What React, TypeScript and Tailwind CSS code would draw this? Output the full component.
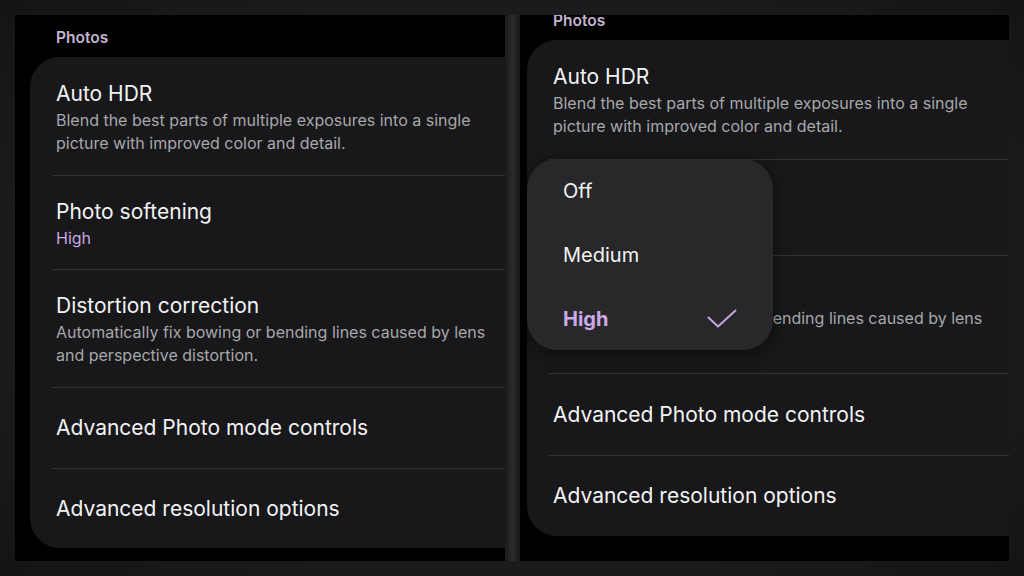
import React from "react";

type Row = {
  title: string;
  desc?: string;
  value?: string;
};

const rows: Row[] = [
  {
    title: "Auto HDR",
    desc: "Blend the best parts of multiple exposures into a single picture with improved color and detail.",
  },
  { title: "Photo softening", value: "High" },
  {
    title: "Distortion correction",
    desc: "Automatically fix bowing or bending lines caused by lens and perspective distortion.",
  },
  { title: "Advanced Photo mode controls" },
  { title: "Advanced resolution options" },
];

// row heights differ a touch between the two captures
const leftHeights = ["h-[118px]", "h-[94px]", "h-[118px]", "h-[81px]", "h-[80px]"];
const rightHeights = ["h-[119px]", "h-[96px]", "h-[118px]", "h-[82px]", "h-[81px]"];

function SettingsList({ shifted }: { shifted?: boolean }) {
  const heights = shifted ? rightHeights : leftHeights;
  return (
    <div className={shifted ? "-mt-[16px] -ml-[8px] w-[540px]" : "w-[540px]"}>
      <div
        className={`pl-[41px] text-[15.5px] font-semibold leading-[20px] text-[#c4b6d0] ${
          shifted ? "h-[41px] pt-[12px]" : "h-[42px] pt-[13px]"
        }`}
      >
        Photos
      </div>
      <div className="ml-[15px] rounded-[30px] bg-[#18181b]">
        {rows.map((r, i) => (
          <div
            key={r.title}
            className={`ml-[22px] flex flex-col justify-center pl-[4px] ${heights[i]} ${
              i > 0 ? "border-t border-[#333336]" : ""
            } ${r.desc || r.value ? "pt-[3px]" : ""}`}
          >
            <div className="text-[21px] leading-[26px] text-[#f3f3f3]">{r.title}</div>
            {r.desc && (
              <div className="mt-[2px] w-[445px] text-[16px] leading-[23px] text-[#a7a7aa]">
                {r.desc}
              </div>
            )}
            {r.value && (
              <div className="mt-[2px] text-[16px] leading-[22px] text-[#c9a6e6]">{r.value}</div>
            )}
          </div>
        ))}
      </div>
    </div>
  );
}

function SofteningMenu() {
  const items = ["Off", "Medium", "High"];
  return (
    <div className="absolute left-[7px] top-[144px] h-[191px] w-[246px] overflow-hidden rounded-[30px] bg-[#28282a] shadow-[0_4px_16px_rgba(0,0,0,0.5)]">
      {items.map((it) => {
        const selected = it === "High";
        return (
          <div key={it} className="flex h-[64px] items-center justify-between pl-[36px] pr-[36px]">
            <span
              className={
                selected
                  ? "text-[20px] font-bold text-[#cba8e8]"
                  : "text-[20px] text-[#f3f3f3]"
              }
            >
              {it}
            </span>
            {selected && (
              <svg width="30" height="20" viewBox="0 0 30 20" fill="none">
                <path
                  d="M1.5 8.5 L11 17.5 L28.5 1.5"
                  stroke="#c6a3e3"
                  strokeWidth="2"
                  strokeLinecap="round"
                  strokeLinejoin="round"
                />
              </svg>
            )}
          </div>
        );
      })}
    </div>
  );
}

export default function App() {
  return (
    <div
      className="flex h-[576px] w-[1024px] items-start bg-[radial-gradient(ellipse_at_center,#202022_0%,#1b1b1d_70%,#141416_100%)] pl-[15px] pt-[15px]"
      style={{ fontFamily: "Inter, 'Noto Sans', sans-serif" }}
    >
      <div className="relative h-[546px] w-[490px] overflow-hidden bg-black">
        <SettingsList />
      </div>
      <div className="h-[546px] w-[15px] bg-gradient-to-r from-[#1a1a1c] via-[#2c2c2e] to-[#1a1a1c]" />
      <div className="relative h-[546px] w-[489px] overflow-hidden bg-black">
        <SettingsList shifted />
        <SofteningMenu />
      </div>
    </div>
  );
}
